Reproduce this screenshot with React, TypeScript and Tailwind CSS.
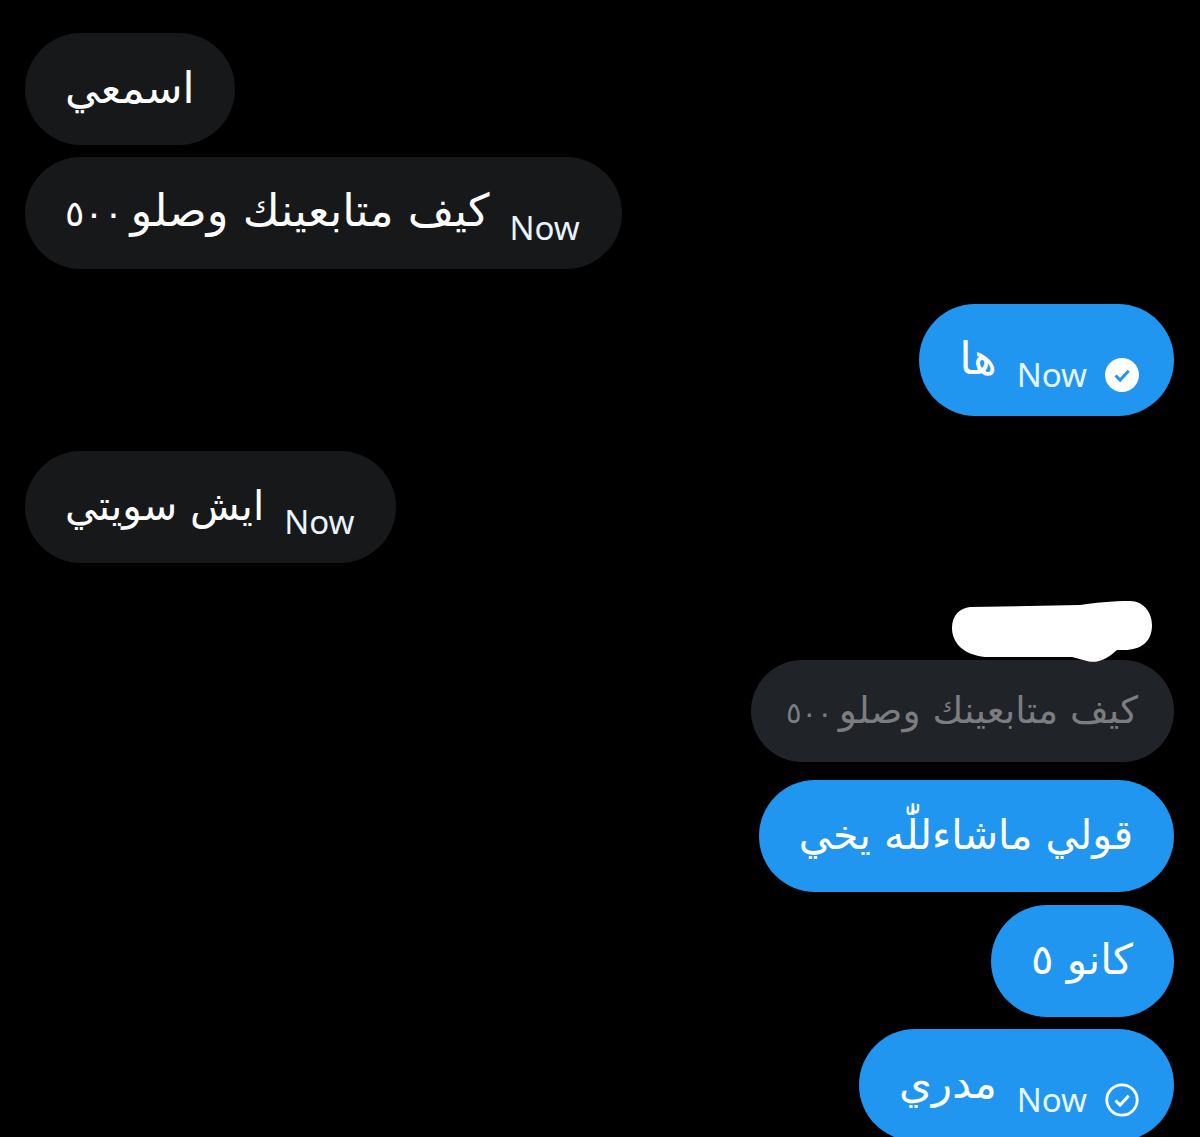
import React from "react";

type Tick = "read" | "sent";

const arabic = "font-['DejaVu_Sans','Noto_Sans',sans-serif]";

function ReadIcon({ type }: { type: Tick }) {
  if (type === "read") {
    return (
      <svg width="34" height="34" viewBox="0 0 34 34" className="block shrink-0">
        <circle cx="17" cy="17" r="17" fill="#fff" />
        <path d="M10.5 17.5l4.6 4.6 8.6-9.4" fill="none" stroke="#2196f0" strokeWidth="3" />
      </svg>
    );
  }
  return (
    <svg width="34" height="34" viewBox="0 0 34 34" className="block shrink-0">
      <circle cx="17" cy="17" r="15.2" fill="none" stroke="#fff" strokeWidth="2.8" />
      <path d="M10.5 17.5l4.6 4.6 8.6-9.4" fill="none" stroke="#fff" strokeWidth="3" />
    </svg>
  );
}

function Bubble({
  text,
  size = "text-[43px]",
  mine,
  time,
  tick,
}: {
  text: React.ReactNode;
  size?: string;
  mine?: boolean;
  time?: boolean;
  tick?: Tick;
}) {
  return (
    <div
      className={`flex h-[112px] shrink-0 items-center rounded-[56px] pl-[40px] text-white ${
        tick ? "pr-[35px]" : time ? "pr-[42px]" : "pr-[41px]"
      } ${mine ? "self-end bg-[#2196f0]" : "self-start bg-[#17181a]"}`}
    >
      <span dir="rtl" className={`${arabic} ${size} -mt-[2px] leading-[56px] whitespace-nowrap`}>
        {text}
      </span>
      {time && (
        <span className="mt-[30px] ml-[20px] font-['Noto_Sans',sans-serif] text-[33px] leading-[40px] text-[#e8f4fd]">
          Now
        </span>
      )}
      {tick && (
        <span className="mt-[30px] ml-[18px]">
          <ReadIcon type={tick} />
        </span>
      )}
    </div>
  );
}

// the reply block: blanked-out name sitting on top of the quoted message
function QuotedReply({ text }: { text: React.ReactNode }) {
  return (
    <div className="relative mt-[97px] self-end">
      <svg width="200" height="62" viewBox="0 0 200 62" className="absolute right-[22px] top-[-59px] z-10">
        <path
          d="M18 6 L128 4 C142 2 160 0 178 0 C192 0 200 12 200 24 C200 40 190 49 172 49 L165 49 C155 58 145 63 135 60 C130 59 125 57 120 56 L33 56 C12 54 0 42 0 27 C0 14 8 7 18 6Z"
          fill="#fff"
        />
      </svg>
      <div className="flex h-[102px] items-center rounded-[51px] bg-[#202327] pl-[35px] pr-[36px]">
        <span dir="rtl" className={`${arabic} text-[37.5px] leading-[50px] whitespace-nowrap text-[#7b7d81]`}>
          {text}
        </span>
      </div>
    </div>
  );
}

export default function App() {
  return (
    <div className="flex h-[1137px] flex-col overflow-hidden bg-black pt-[33px] pl-[25px] pr-[26px]">
      <Bubble text="اسمعي" />
      <div className="mt-[12px] flex flex-col">
        <Bubble
          size="text-[45px]"
          text={
            <>
              كيف متابعينك وصلو
              <span className="text-[36px] [word-spacing:-4px] tracking-[-4px]"> ٥٠٠</span>
            </>
          }
          time
        />
      </div>
      <div className="mt-[35px] flex flex-col">
        <Bubble text="ها" size="text-[45px]" mine time tick="read" />
      </div>
      <div className="mt-[35px] flex flex-col">
        <Bubble text="ايش سويتي" size="text-[40.5px]" time />
      </div>
      <QuotedReply
        text={
          <>
            كيف متابعينك وصلو
            <span className="text-[29px] [word-spacing:-3px] tracking-[-4.5px]"> ٥٠٠</span>
          </>
        }
      />
      <div className="mt-[18px] flex flex-col gap-[13px]">
        <Bubble text="قولي ماشاءللّٰه يخي" size="text-[41px]" mine />
        <Bubble text="كانو ٥" size="text-[42px]" mine />
        <div className="-mt-[1px] flex flex-col">
          <Bubble text="مدري" size="text-[42px]" mine time tick="sent" />
        </div>
      </div>
    </div>
  );
}
